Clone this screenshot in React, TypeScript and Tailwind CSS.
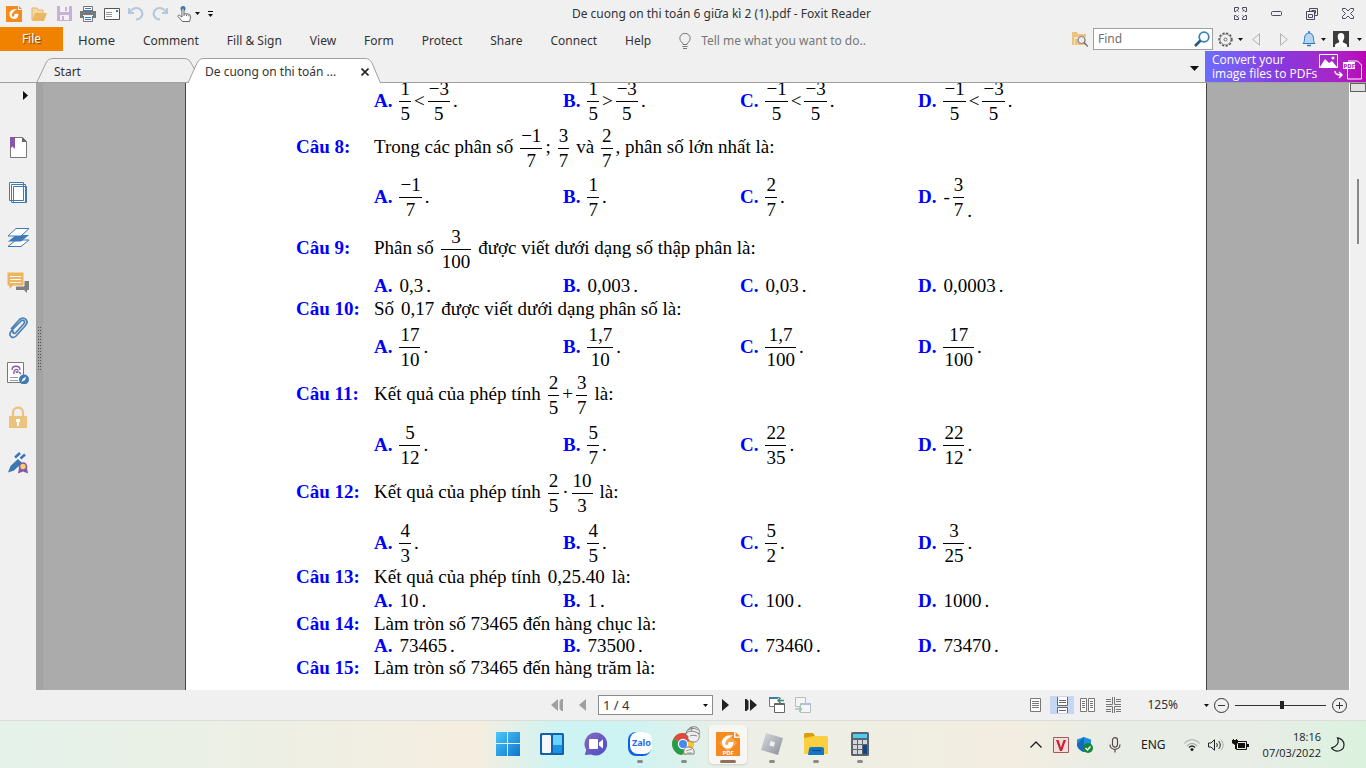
import type { ReactNode } from "react";

const menuItems = ["Comment", "Fill & Sign", "View", "Form", "Protect", "Share", "Connect", "Help"];

function Caret({ className = "" }: { className?: string }) {
  return (
    <svg className={`w-[5px] h-[3px] shrink-0 ${className}`} viewBox="0 0 5 3">
      <path d="M0 0h5L2.5 3z" fill="#111" />
    </svg>
  );
}

/* ---------- Math ---------- */

function Frac({ n, d }: { n: string; d: string }) {
  return (
    <span className="inline-flex flex-col pt-0.5 text-center leading-6">
      <span className="px-px">{n}</span>
      <span className="px-px border-t border-black">{d}</span>
    </span>
  );
}

function Formula({ children }: { children: ReactNode }) {
  return <span className="inline-flex items-center gap-[3px]">{children}</span>;
}

/* ---------- Questions ---------- */

type Question = {
  id: number;
  text?: ReactNode;
  options?: ReactNode[];
  textHeight?: string;
  optionsHeight?: string;
};

const dot = <span>.</span>;

const questions: Question[] = [
  {
    id: 7,
    optionsHeight: "h-12",
    options: [
      <><Frac n="1" d="5" />&lt;<Frac n="−3" d="5" />{dot}</>,
      <><Frac n="1" d="5" />&gt;<Frac n="−3" d="5" />{dot}</>,
      <><Frac n="−1" d="5" />&lt;<Frac n="−3" d="5" />{dot}</>,
      <><Frac n="−1" d="5" />&lt;<Frac n="−3" d="5" />{dot}</>,
    ],
  },
  {
    id: 8,
    textHeight: "h-12",
    optionsHeight: "h-[50px]",
    text: (
      <>
        Trong các phân số
        <Formula><Frac n="−1" d="7" />;</Formula>
        <Frac n="3" d="7" />
        và
        <Formula><Frac n="2" d="7" />, phân số lớn nhất là:</Formula>
      </>
    ),
    options: [
      <><Frac n="−1" d="7" />{dot}</>,
      <><Frac n="1" d="7" />{dot}</>,
      <><Frac n="2" d="7" />{dot}</>,
      <>-<Frac n="3" d="7" /><span className="self-end">.</span></>,
    ],
  },
  {
    id: 9,
    textHeight: "h-[54px]",
    optionsHeight: "h-[22px]",
    text: <>Phân số <Frac n="3" d="100" /> được viết dưới dạng số thập phân là:</>,
    options: [<>0,3{dot}</>, <>0,003{dot}</>, <>0,03{dot}</>, <>0,0003{dot}</>],
  },
  {
    id: 10,
    textHeight: "h-6",
    optionsHeight: "h-12",
    text: <>Số <span>0,17</span> <span>được viết dưới dạng phân số là:</span></>,
    options: [
      <><Frac n="17" d="10" />{dot}</>,
      <><Frac n="1,7" d="10" />{dot}</>,
      <><Frac n="1,7" d="100" />{dot}</>,
      <><Frac n="17" d="100" />{dot}</>,
    ],
  },
  {
    id: 11,
    textHeight: "h-[50px]",
    optionsHeight: "h-12",
    text: <>Kết quả của phép tính <Formula><Frac n="2" d="5" />+<Frac n="3" d="7" /></Formula> là:</>,
    options: [
      <><Frac n="5" d="12" />{dot}</>,
      <><Frac n="5" d="7" />{dot}</>,
      <><Frac n="22" d="35" />{dot}</>,
      <><Frac n="22" d="12" />{dot}</>,
    ],
  },
  {
    id: 12,
    textHeight: "h-[50px]",
    optionsHeight: "h-12",
    text: <>Kết quả của phép tính <Formula><Frac n="2" d="5" />·<Frac n="10" d="3" /></Formula> là:</>,
    options: [
      <><Frac n="4" d="3" />{dot}</>,
      <><Frac n="4" d="5" />{dot}</>,
      <><Frac n="5" d="2" />{dot}</>,
      <><Frac n="3" d="25" />{dot}</>,
    ],
  },
  {
    id: 13,
    textHeight: "h-6",
    optionsHeight: "h-6",
    text: <>Kết quả của phép tính <span>0,25.40</span> <span>là:</span></>,
    options: [<>10{dot}</>, <>1{dot}</>, <>100{dot}</>, <>1000{dot}</>],
  },
  {
    id: 14,
    textHeight: "h-[22px]",
    optionsHeight: "h-[22px]",
    text: "Làm tròn số 73465 đến hàng chục là:",
    options: [<>73465{dot}</>, <>73500{dot}</>, <>73460{dot}</>, <>73470{dot}</>],
  },
  { id: 15, textHeight: "h-[22px]", text: "Làm tròn số 73465 đến hàng trăm là:" },
];

function QuestionBlock({ q }: { q: Question }) {
  return (
    <li>
      {q.text && (
        <div className={`flex items-center ${q.textHeight}`}>
          <b className="w-[78px] shrink-0 text-[#0000ff]">Câu {q.id}:</b>
          <p className="flex items-center gap-[7px]">{q.text}</p>
        </div>
      )}
      {q.options && (
        <div className={`grid grid-cols-[189px_177px_178px_auto] items-center pl-[78px] ${q.optionsHeight}`}>
          {q.options.map((opt, i) => (
            <div key={i} className="flex items-center gap-[7px]">
              <b className="text-[#0000ff]">{"ABCD"[i]}.</b>
              <Formula>{opt}</Formula>
            </div>
          ))}
        </div>
      )}
    </li>
  );
}

/* ---------- Title bar ---------- */

function FoxitLogo({ className }: { className: string }) {
  return (
    <svg className={className} viewBox="0 0 24 24">
      <path d="M0 0h18v6h6v18H0z" fill="#f58a1f" />
      <path d="M19.500 0L24 4.500h-4.500z" fill="#f58a1f" />
      <path d="M17 4.500c-7-1-12 3-12 8 0 4 3 7 7 7 4.500 0 7-3.500 6.500-8h-6c.3 3-.5 4.500-2 4.500-1.700 0-2-2-1.300-4 1-3 4-5.500 7.800-7.500z" fill="#fff" />
    </svg>
  );
}

function TitleBar() {
  return (
    <div className="flex items-center h-[27px]">
      <div className="flex items-center gap-2 pl-1.5">
        <FoxitLogo className="w-4 h-4" />
        <button aria-label="Open" className="pl-px">
          <svg className="w-[17px] h-4" viewBox="0 0 17 16">
            <path d="M1 14V2h5l1.500 2H12v3" fill="#f3d9a8" stroke="#e6b566" />
            <path d="M1 15L4 7h12l-3 8z" fill="#ecb762" />
          </svg>
        </button>
        <button aria-label="Save" className="pl-px">
          <svg className="w-[15px] h-[15px]" viewBox="0 0 15 15">
            <path d="M0 0h15v15H0z" fill="#c7b1d4" />
            <path d="M3 0h9v6H3zM3 9h9v5H3z" fill="#f4f0f6" />
            <path d="M8 1h2v4H8zM5 10h2v4H5z" fill="#c7b1d4" />
          </svg>
        </button>
        <button aria-label="Print">
          <svg className="w-4 h-4" viewBox="0 0 16 16">
            <path d="M3.500 5V.5h9V5M3.500 10v5.500h9V10" fill="#fff" stroke="#777" />
            <path d="M0 5h16v7h-3V9H3v3H0z" fill="#777" />
            <path d="M3 4.500h10" stroke="#3b76b5" />
            <path d="M5 2.500h6M5 11.500h6M5 13.500h6" stroke="#3b76b5" />
          </svg>
        </button>
        <button aria-label="Email">
          <svg className="w-4 h-3" viewBox="0 0 16 12">
            <path d="M.5.5h15v11H.5z" fill="#fff" stroke="#555" />
            <path d="M2 4.500h6M2 6.500h6M2 8.500h6" stroke="#999" />
            <path d="M12 2h2v2h-2z" fill="#3b76b5" />
          </svg>
        </button>
        <button aria-label="Undo">
          <svg className="w-4 h-4" viewBox="0 0 16 16" fill="none" stroke="#b4c8dc" strokeWidth="2">
            <path d="M1 2v5h5M1.500 6.500C4 2 9 0.500 12.500 3.500c4 4 1 10-4.500 10" />
          </svg>
        </button>
        <button aria-label="Redo">
          <svg className="w-4 h-4" viewBox="0 0 16 16" fill="none" stroke="#b4c8dc" strokeWidth="2">
            <path d="M15 2v5h-5M14.500 6.500C12 2 7 0.500 3.500 3.500c-4 4-1 10 4.500 10" />
          </svg>
        </button>
        <button aria-label="Hand tool" className="flex items-center gap-[3px] pl-px">
          <svg className="w-[15px] h-4" viewBox="0 0 15 16">
            <circle cx="6" cy="2.500" r="2.500" fill="#3b76b5" />
            <path d="M5 11V3.500c0-1.300 2-1.300 2 0V8c2-.5 6 0 6.500 1.500.3 1.500-.3 3.500-1 6H5.500L1 10.500c-.5-1.200 1-1.800 2-.8z" fill="#fff" stroke="#666" />
            <path d="M7 8v2M9.500 8.500V10M12 9v1.500" stroke="#666" />
          </svg>
          <Caret />
        </button>
        <button aria-label="Customize" className="flex flex-col gap-0.5">
          <span className="h-px w-[5px] bg-black" />
          <Caret />
        </button>
      </div>

      <h1 className="flex-1 pr-1 text-center text-[12px]">De cuong on thi toán 6 giữa kì 2 (1).pdf - Foxit Reader</h1>

      <div className="flex items-center gap-6 pr-3 text-[#4a4a60]">
        <button aria-label="Full screen">
          <svg className="w-[13px] h-[13px]" viewBox="0 0 13 13" fill="none" stroke="currentColor">
            <path d="M.5.5h4v1.500L2 4.500H.5zM8.500.5h4v4H11L8.500 2zM.5 8.500H2L4.500 11v1.500h-4zM11 8.500h1.500v4h-4V11z" />
            <path d="M3 3l1.500 1.500M10 3L8.500 4.500M3 10l1.500-1.500M10 10L8.500 8.500" />
          </svg>
        </button>
        <button aria-label="Minimize">
          <svg className="w-[11px] h-[11px]" viewBox="0 0 11 11" fill="none" stroke="currentColor">
            <rect x=".5" y="3.500" width="10" height="4" rx="1" />
          </svg>
        </button>
        <button aria-label="Restore">
          <svg className="w-3 h-3" viewBox="0 0 12 12" fill="none" stroke="currentColor">
            <path d="M3.500 3.500v-3h8v7h-3M5.500 2.500h4v3M.5 3.500h8v8h-8zM2.500 6.500h4v3h-4z" />
          </svg>
        </button>
        <button aria-label="Close">
          <svg className="w-3 h-[11px]" viewBox="0 0 12 11" fill="none" stroke="currentColor">
            <path d="M.5.5h3L6 3 8.500.5h3v2L8.500 5.500l3 3v2h-3L6 8l-2.500 2.500h-3v-2l3-3-3-3z" />
          </svg>
        </button>
      </div>
    </div>
  );
}

/* ---------- Menu bar ---------- */

function MenuBar() {
  return (
    <div className="flex items-center h-6 text-[12px]">
      <button className="w-[63px] h-6 bg-[#f08200] text-white [text-shadow:1px_1px_1px_#7a4300]">File</button>
      <nav className="flex items-center gap-7 ml-[15px] pt-1">
        <button className="text-[13px]">Home</button>
        {menuItems.map((item) => (
          <button key={item}>{item}</button>
        ))}
      </nav>
      <label className="flex items-center gap-2.5 ml-7 pt-1">
        <svg className="w-3 h-4" viewBox="0 0 12 16" fill="none" stroke="#777">
          <path d="M4 11.500C4 9.500.8 8.500.8 5.500a5.200 5.200 0 0 1 10.400 0c0 3-3.200 4-3.200 6zM3.500 13.500h5M4 15.500h4" />
        </svg>
        <input className="w-[190px] outline-none placeholder:text-[#777]" placeholder="Tell me what you want to do.." />
      </label>

      <div className="flex items-center ml-auto pr-1">
        <svg className="w-4 h-4 mr-[5px]" viewBox="0 0 16 16">
          <path d="M0 1h5l1 2h8v11H0z" fill="#ecc37c" />
          <path d="M2 6h12v2H3v6H2z" fill="#f6e2bd" />
          <circle cx="9.500" cy="9" r="3.500" fill="#eee" stroke="#777" />
          <path d="M12 11.500l4 4" stroke="#777" strokeWidth="1.500" />
        </svg>
        <label className="flex items-center w-[120px] h-[22px] border border-[#a0a0a0] bg-white pl-1 pr-0.5">
          <input className="w-full outline-none placeholder:text-[#707070]" placeholder="Find" />
          <svg className="w-4 h-4 shrink-0" viewBox="0 0 16 16">
            <circle cx="10" cy="6" r="4.800" fill="#fff" stroke="#3b86b8" strokeWidth="1.800" />
            <path d="M6.500 9.500L1 15" stroke="#205a90" strokeWidth="2.600" />
          </svg>
        </label>
        <button aria-label="Settings" className="flex items-center gap-[5px] ml-[5px]">
          <svg className="w-[15px] h-[15px]" viewBox="0 0 15 15" fill="none" stroke="#555">
            <circle cx="7.500" cy="7.500" r="6.400" strokeWidth="1.500" strokeDasharray="2.200 1.550" />
            <circle cx="7.500" cy="7.500" r="5.400" strokeWidth=".6" />
            <circle cx="7.500" cy="7.500" r="1.500" strokeWidth=".8" />
          </svg>
          <Caret />
        </button>
        <button aria-label="Previous" className="ml-[9px]">
          <svg className="w-2 h-[13px]" viewBox="0 0 8 13" fill="none" stroke="#b0b0b0"><path d="M7.500.8v11.400L.7 6.500z" /></svg>
        </button>
        <button aria-label="Next" className="ml-5">
          <svg className="w-2 h-[13px]" viewBox="0 0 8 13" fill="none" stroke="#b0b0b0"><path d="M.5.8v11.400L7.300 6.500z" /></svg>
        </button>
        <button aria-label="Notifications" className="flex items-center gap-[5px] ml-3.5">
          <svg className="w-[14px] h-4" viewBox="0 0 14 16">
            <path d="M1 12.500c1-1 1.500-2 1.500-5C2.500 4 4.500 2 7 2s4.500 2 4.500 5.500c0 3 .5 4 1.500 5z" fill="#b5d5f5" stroke="#2f78b8" />
            <path d="M7 0v2M5 14.500h4" stroke="#2f78b8" strokeWidth="1.500" />
          </svg>
          <Caret />
        </button>
        <button aria-label="Account" className="flex items-center gap-2 ml-[7px]">
          <svg className="w-4 h-4" viewBox="0 0 16 16">
            <path d="M0 0h16v16H0z" fill="#3c3c3c" />
            <path d="M8 2c2.200 0 3.300 1.500 3.300 3.800S10 10 9.700 10.500c0 1.500 3.300 1.500 4.300 3.500v2H2v-2c1-2 4.300-2 4.300-3.500C6 10 4.700 8 4.700 5.800S5.800 2 8 2z" fill="#fff" />
          </svg>
          <Caret />
        </button>
      </div>
    </div>
  );
}

/* ---------- Document tabs ---------- */

function TabBar() {
  return (
    <div className="flex h-8 border-b border-[#a0a0a0] text-[12px]">
      <button className="relative flex items-center mt-[7px] ml-9 w-40 h-6 pt-1 pl-[18px]">
        <svg className="absolute inset-0 w-full h-full" viewBox="0 0 160 24" fill="none" stroke="#a0a0a0">
          <path d="M1 24L10 5Q12 .5 17 .5H148Q153 .5 155 5L160 14" />
        </svg>
        <span className="relative">Start</span>
      </button>
      <div className="relative flex items-center mt-[7px] -ml-2 w-[193px] h-6 pt-1 pl-[17px]">
        <svg className="absolute inset-0 w-full h-[25px]" viewBox="0 0 193 25" fill="#fff" stroke="#a0a0a0">
          <path d="M0 25L9 5Q11 .5 16 .5H177Q182 .5 184 5L192.500 25" />
        </svg>
        <span className="relative">De cuong on thi toán ...</span>
        <button aria-label="Close tab" className="relative ml-auto mr-3">
          <svg className="w-2 h-2" viewBox="0 0 8 8" stroke="#222" strokeWidth="1.600"><path d="M.5.5l7 7M7.500.5l-7 7" /></svg>
        </button>
      </div>
      <button aria-label="Tab list" className="ml-auto mr-[6px] pt-1">
        <svg className="w-[9px] h-[5px]" viewBox="0 0 9 5"><path d="M0 0h9L4.500 5z" fill="#111" /></svg>
      </button>
      <a
        href="#convert"
        className="flex items-center justify-between w-[161px] pl-[7px] pr-1 bg-linear-to-r from-[#6b6cff] via-[#8a35dc] to-[#bb00b8] text-white leading-[14px] font-['Open_Sans',sans-serif]"
      >
        <span className="whitespace-nowrap">Convert your<br />image files to PDFs</span>
        <svg className="w-[43px] h-[27px] -ml-2 shrink-0" viewBox="0 0 43 27" fill="none" stroke="#fff">
          <path d="M.5 1.500h18v13H.5z" />
          <path d="M1 14l5-8 4 4 3-2 5 6z" fill="#fff" stroke="none" />
          <circle cx="14" cy="5" r="1.500" fill="#fff" stroke="none" />
          <path d="M16 18c0 3 2 4 6 4M20 19l3 3-3 3" strokeWidth="1.500" />
          <path d="M28.500 16v10h14V12l-4-4H29" />
          <path d="M24 9h12v7H24z" fill="#fff" stroke="none" />
          <text x="24.500" y="15" fontSize="6" fontWeight="700" fill="#a010c0" stroke="none">PDF</text>
        </svg>
      </a>
    </div>
  );
}

/* ---------- Left panel ---------- */

const panelIcons: { label: string; icon: ReactNode }[] = [
  {
    label: "Bookmarks",
    icon: (
      <>
        <path d="M3.500 1.500h12l4 4v16h-16z" fill="#fff" stroke="#777" />
        <path d="M15 1l5 5h-5z" fill="#666" />
        <path d="M3 1h5v12l-2.500-2.500L3 13z" fill="#8658a6" />
      </>
    ),
  },
  {
    label: "Pages",
    icon: (
      <g fill="#fff" stroke="#3f7ab5">
        <path d="M2.500 1.500h14v18h-14zM4.500 3.500h14v18h-14zM6.500 5.500h13v16h-13z" />
      </g>
    ),
  },
  {
    label: "Layers",
    icon: (
      <>
        <path d="M1 20.500L9 14h13l-8 6.500z" fill="#fff" stroke="#3f7ab5" />
        <path d="M1 15.500L9 9h13l-8 6.500z" fill="#3f7ab5" />
        <path d="M1 10L9 2.500h13L14 10z" fill="#fff" stroke="#3f7ab5" />
      </>
    ),
  },
  {
    label: "Comments",
    icon: (
      <>
        <path d="M11 10h11v9h-2v3l-3-3h-8v-3z" fill="#808080" />
        <path d="M0 1h17v14H6l-4 4v-4H0z" fill="#f0b45c" stroke="#f0f0f0" />
        <path d="M3 5.500h11M3 8.500h11M3 11.500h11" stroke="#fff" />
      </>
    ),
  },
  {
    label: "Attachments",
    icon: (
      <path d="M6 13l8-8c2-2 4.500 0 3 2.500l-8 9c-2 2-4 0-2.500-2M6 13l-2 2.500c-3 4 1.500 8 5 4.500l9-10c5-5-1-10.500-5.500-6.500L4 13" fill="none" stroke="#4a80b5" strokeWidth="1.700" />
    ),
  },
  {
    label: "Signatures",
    icon: (
      <>
        <path d="M.5 1.500h16v20H.5z" fill="#fff" stroke="#777" />
        <path d="M5 9c0-5 8-5 8 0M7 13c-1-5 4-6 4-3 0 2-2 2-2 0M12 11l2 2" fill="none" stroke="#8658a6" strokeWidth="1.300" />
        <path d="M3 16.500h8M3 19.500h8" stroke="#999" />
        <circle cx="17" cy="18.500" r="5" fill="#3f7ab5" />
        <path d="M14.500 21l1-3 3.500-2.500-1 3.500z" fill="#fff" />
      </>
    ),
  },
  {
    label: "Security",
    icon: (
      <>
        <path d="M6 11V6.500c0-6.500 10-6.500 10 0V11" fill="none" stroke="#ecc37c" strokeWidth="2.200" />
        <path d="M2 10h18v12H2z" fill="#ecc37c" />
        <path d="M9 13h4v3h-1v4h-2v-4H9z" fill="#fff" />
      </>
    ),
  },
  {
    label: "Digital signing",
    icon: (
      <>
        <path d="M1 21.500L3.500 15l7.500-7 4 4-8 7.500z" fill="#3b76b5" />
        <path d="M13.500 7.500L18 3.500M8 6.500l5-4.500" stroke="#3b76b5" strokeWidth="2.500" />
        <path d="M12 17l-1 5.500 5-2 5 2-1-5.500z" fill="#8658a6" />
        <circle cx="16" cy="15.500" r="3.500" fill="#f3d36a" stroke="#8658a6" strokeWidth="1.600" />
      </>
    ),
  },
];

function LeftPanel() {
  return (
    <aside className="flex flex-col w-9 shrink-0 bg-[#f0f0f0] pt-2 pl-[7px]">
      <button aria-label="Expand panel" className="ml-4 mb-9">
        <svg className="w-[5px] h-[9px]" viewBox="0 0 5 9"><path d="M0 0l5 4.500L0 9z" fill="#111" /></svg>
      </button>
      <div className="flex flex-col gap-[22px]">
        {panelIcons.map(({ label, icon }) => (
          <button key={label} aria-label={label}>
            <svg className="w-[23px] h-[23px]" viewBox="0 0 23 23">{icon}</svg>
          </button>
        ))}
      </div>
    </aside>
  );
}

/* ---------- Status bar ---------- */

function StatusBar() {
  return (
    <div className="grid grid-cols-[1fr_auto_1fr] items-center h-[30px] bg-[#f0f0f0] text-[12px]">
      <span />
      <div className="flex items-center">
        <button aria-label="First page">
          <svg className="w-3 h-3" viewBox="0 0 12 12" fill="#a0a0a0"><path d="M7 0v12L0 6zM12 0h-1.500l-2 2v8l2 2H12z" /></svg>
        </button>
        <button aria-label="Previous page" className="ml-4 mr-3">
          <svg className="w-[7px] h-3" viewBox="0 0 7 12" fill="#a0a0a0"><path d="M7 0v12L0 6z" /></svg>
        </button>
        <div className="relative flex items-center">
          <select aria-label="Page" className="appearance-none w-[115px] h-5 pl-1 bg-white border border-[#8c8c8c] text-[13px] leading-4">
            <option>1 / 4</option>
          </select>
          <Caret className="absolute right-[5px]" />
        </div>
        <button aria-label="Next page" className="ml-[9px] mr-4">
          <svg className="w-[7px] h-3" viewBox="0 0 7 12" fill="#222"><path d="M0 0v12l7-6z" /></svg>
        </button>
        <button aria-label="Last page">
          <svg className="w-3 h-3" viewBox="0 0 12 12" fill="#222"><path d="M5 0v12l7-6zM0 0h1.500l2 2v8l-2 2H0z" /></svg>
        </button>
        <button aria-label="Previous view" className="ml-3">
          <svg className="w-4 h-4" viewBox="0 0 16 16">
            <path d="M.5.5h10v9H.5z" fill="#fff" stroke="#777" />
            <path d="M0 0h9v2H0z" fill="#3f7ab5" />
            <path d="M5.500 6.500h10v9h-10z" fill="#fff" stroke="#666" />
            <path d="M5 7.500h11" stroke="#666" />
            <path d="M15 3.500H9M11.500 1L9 3.500 11.500 6" fill="none" stroke="#3d9070" strokeWidth="1.500" />
          </svg>
        </button>
        <button aria-label="Next view" className="ml-2.5 mr-1">
          <svg className="w-4 h-4" viewBox="0 0 16 16">
            <path d="M.5.5h10v9H.5z" fill="#f5f5f5" stroke="#bbb" />
            <path d="M5.500 6.500h10v9h-10z" fill="#f5f5f5" stroke="#bbb" />
            <path d="M6 7h10" stroke="#a9c3dd" strokeWidth="2" />
            <path d="M0 12h6M4 9.500L6.500 12 4 14.500" fill="none" stroke="#9cc8b4" strokeWidth="1.500" />
          </svg>
        </button>
      </div>

      <div className="flex items-center justify-end pr-[19px]">
        <button aria-label="Single page" className="mr-[9px]">
          <svg className="w-[11px] h-[14px]" viewBox="0 0 11 14" fill="#fff" stroke="#777">
            <path d="M.5.5h10v13H.5zM2 3.500h7M2 5.500h7M2 7.500h7M2 9.500h7" />
          </svg>
        </button>
        <button aria-label="Continuous" className="flex justify-center items-center w-6 h-[18px] bg-[#c4d6f2]">
          <svg className="w-[11px] h-4" viewBox="0 0 11 16" fill="#fff" stroke="#666">
            <path d="M.5-.5h10v9H.5zM.5 16.500v-6h10v6M2 3.500h7M2 5.500h7M2 13.500h7" />
          </svg>
        </button>
        <button aria-label="Facing" className="ml-1.5">
          <svg className="w-[15px] h-[14px]" viewBox="0 0 15 14" fill="#fff" stroke="#777">
            <path d="M.5.5h6v13h-6zM8.500.5h6v13h-6zM2 3.500h3M2 5.500h3M2 7.500h3M2 9.500h3M10 3.500h3M10 5.500h3M10 7.500h3M10 9.500h3" />
          </svg>
        </button>
        <button aria-label="Continuous facing" className="ml-[11px]">
          <svg className="w-[15px] h-4" viewBox="0 0 15 16" fill="none" stroke="#777">
            <path d="M6.500 0v7.500H0M8.500 0v7.500H15M0 9.500h6.500V16M15 9.500H8.500V16M0 2.500h5M0 4.500h5M10 2.500h5M10 4.500h5M0 12.500h5M0 14.500h5M10 12.500h5M10 14.500h5" />
          </svg>
        </button>
        <button className="flex items-center gap-[26px] ml-[26px] mr-[5px]">125% <Caret /></button>
        <button aria-label="Zoom out">
          <svg className="w-[15px] h-[15px]" viewBox="0 0 15 15" fill="none" stroke="#333"><circle cx="7.500" cy="7.500" r="7" /><path d="M4 7.500h7" /></svg>
        </button>
        <input
          type="range"
          aria-label="Zoom"
          defaultValue={52}
          className="appearance-none w-[91px] h-px mx-1.5 bg-[#333] [&::-webkit-slider-thumb]:appearance-none [&::-webkit-slider-thumb]:w-1 [&::-webkit-slider-thumb]:h-2 [&::-webkit-slider-thumb]:bg-[#222]"
        />
        <button aria-label="Zoom in">
          <svg className="w-[15px] h-[15px]" viewBox="0 0 15 15" fill="none" stroke="#333"><circle cx="7.500" cy="7.500" r="7" /><path d="M4 7.500h7M7.500 4v7" /></svg>
        </button>
      </div>
    </div>
  );
}

/* ---------- Taskbar ---------- */

const apps: { name: string; running?: boolean; active?: boolean; icon: ReactNode }[] = [
  {
    name: "Start",
    icon: (
      <>
        <defs>
          <linearGradient id="win" x1="0" y1="0" x2="1" y2="1">
            <stop offset="0" stopColor="#4cc8f8" />
            <stop offset="1" stopColor="#0f74d0" />
          </linearGradient>
        </defs>
        <path d="M0 0h11v11H0zM12 0h12v11H12zM0 12h11v12H0zM12 12h12v12H12z" fill="url(#win)" />
      </>
    ),
  },
  {
    name: "Widgets",
    icon: (
      <>
        <rect y="1" width="24" height="22" rx="1.500" fill="#1560ac" />
        <rect x="2" y="3" width="9" height="18" rx="1" fill="#f4f6f8" />
        <path d="M13 3h9v10h-9z" fill="#68d4fb" />
        <path d="M13 13h9v8h-9z" fill="#1793e8" />
      </>
    ),
  },
  {
    name: "Chat",
    icon: (
      <>
        <defs>
          <linearGradient id="chat" x1="0" y1="0" x2="1" y2="1">
            <stop offset="0" stopColor="#8a68c0" />
            <stop offset="1" stopColor="#4a4cc8" />
          </linearGradient>
        </defs>
        <path d="M12 .5A11.500 11.500 0 1 1 7 22.500L.8 23l1.400-5A11.500 11.500 0 0 1 12 .5z" fill="url(#chat)" />
        <rect x="5" y="7" width="9" height="10" rx="1" fill="#fff" />
        <path d="M15 10.500L19 7.500v9L15 13.500z" fill="#fff" />
      </>
    ),
  },
  {
    name: "Zalo",
    running: true,
    icon: (
      <>
        <rect width="23" height="24" rx="8" fill="#0b62ea" />
        <rect x="2" y="0" width="22" height="22" rx="8" fill="#fff" />
        <text x="4" y="14" fontSize="9" fontWeight="700" fill="#1b6cf0">Zalo</text>
      </>
    ),
  },
  {
    name: "Chrome",
    running: true,
    icon: (
      <>
        <circle cx="11" cy="12" r="11" fill="#f8c630" />
        <path d="M11 12L1.500 6.500A11 11 0 0 1 21 7.500z" fill="#dd4b3e" />
        <path d="M11 12L1.500 6.500A11 11 0 0 0 10 23l5-8z" fill="#259b4d" />
        <circle cx="11" cy="12" r="5.200" fill="#fff" />
        <circle cx="11" cy="12" r="4" fill="#4687f2" />
        <path d="M14 2c1-6 6-8 10-7 3 1 4 4 3 7 1 4-1 8-5 8-5 0-7-3-6-6-2 0-2-1-2-2z" fill="#eee" stroke="#666" strokeWidth=".8" />
        <path d="M14 1c4-3 9-2 13 1M16-2c3-2 7-2 10 0M18 4c2-1 4-1 7 0M20-5c-1 2-1 3 0 4" fill="none" stroke="#555" strokeWidth=".7" />
        <path d="M12 22c-1-5 1-7 4-7 4 0 7 2 6 7z" fill="#eee" stroke="#666" strokeWidth=".8" />
        <path d="M14 19l6-2M15 21h5" stroke="#777" strokeWidth=".7" />
      </>
    ),
  },
  {
    name: "Foxit Reader",
    running: true,
    active: true,
    icon: (
      <>
        <path d="M0 0h18v6h6v18H0z" fill="#f58a1f" />
        <path d="M19.500 0L24 4.500h-4.500z" fill="#f58a1f" />
        <path d="M12 2l9 9-9 9-9-9z" fill="#f9a64f" />
        <path d="M17 3.500c-6-1-11 2-11 7 0 4 3 6 6 6 4 0 5.500-3 5.500-6.500h-5c0 2-.5 3-1.800 3-1.500 0-1.800-1.500-1.200-3 1-3 4-4.500 7.500-6.500z" fill="#fff" />
        <text x="6.500" y="23" fontSize="6" fontWeight="700" fill="#fff">PDF</text>
      </>
    ),
  },
  {
    name: "Roblox",
    running: true,
    icon: (
      <>
        <defs>
          <linearGradient id="rbx" x1="0" y1="0" x2="1" y2="1">
            <stop offset="0" stopColor="#d9dce0" />
            <stop offset="1" stopColor="#8b9099" />
          </linearGradient>
        </defs>
        <path d="M6 1l17 5-5 17L1 18z" fill="url(#rbx)" />
        <path d="M10.500 9l4.500 1.200-1.200 4.500-4.500-1.200z" fill="#f0f0f0" />
      </>
    ),
  },
  {
    name: "File Explorer",
    running: true,
    icon: (
      <>
        <path d="M0 2.500Q0 1 1.500 1H9l2 3-2 3H0z" fill="#dc9e08" />
        <path d="M0 6l10-2h12.500Q24 4 24 5.500V22H0z" fill="#fbcf40" />
        <path d="M5 17q0-2 2-2h11q2 0 2 2v6H4z" fill="#1476c8" />
        <path d="M8 18.500h9" stroke="#0d5496" strokeWidth="1.500" />
      </>
    ),
  },
  {
    name: "Calculator",
    running: true,
    icon: (
      <>
        <rect x="3" width="18" height="24" rx="1.500" fill="#5b646e" />
        <path d="M5 2h14v4H5z" fill="#4bcdf0" />
        <path d="M5 8h4v4H5zM10 8h4v4h-4zM15 8h4v4h-4zM5 13h4v4H5zM10 13h4v4h-4zM5 18h4v4H5zM10 18h4v4h-4z" fill="#d3d7db" />
        <path d="M15 13h4v9h-4z" fill="#0f4780" />
      </>
    ),
  },
];

function Taskbar() {
  return (
    <footer className="grid grid-cols-[1fr_auto_1fr] items-center h-12 border-t border-[#dcdcd8] bg-[linear-gradient(to_right,#e4f2ea,#f5ede0_35%,#cdf4f3_41%,#cdf4f3_46%,#ecefe6_54%,#f3ede0_74%,#e8ede6_82%,#e8ede6_92%,#dbf2de)] text-[12px] font-['Noto_Sans',sans-serif]">
      <span />
      <div className="flex gap-1.5 pl-0.5">
        {apps.map((app) => (
          <button
            key={app.name}
            aria-label={app.name}
            className={`flex flex-col items-center w-[38px] h-[39px] pt-[7px] rounded ${app.active ? "bg-[#f8f6f2] shadow-sm" : ""}`}
          >
            <svg className="w-6 h-6 shrink-0 overflow-visible" viewBox="0 0 24 24">{app.icon}</svg>
            {app.running && (
              <span className={`mt-1 h-[3px] rounded-full ${app.active ? "w-4 bg-[#94705c]" : "w-1.5 bg-[#8a8a88]"}`} />
            )}
          </button>
        ))}
      </div>

      <div className="flex items-center justify-end pr-[21px] text-[#1a1a1a]">
        <svg className="w-3 h-[7px] mr-[11px]" viewBox="0 0 12 7" fill="none" stroke="#222" strokeWidth="1.400"><path d="M.5 6.500L6 1l5.500 5.500" /></svg>
        <svg className="w-4 h-4 mr-2" viewBox="0 0 16 16">
          <path d="M.5.5h15v15H.5z" fill="#f3dede" stroke="#a05a5a" />
          <path d="M3 3h2.500L8 10.500 10.500 3H13L9 14H7z" fill="#cc2030" />
        </svg>
        <svg className="w-4 h-4 mr-4" viewBox="0 0 16 16">
          <path d="M7 0l7 2.500V7c0 4-3 6.500-7 8-4-1.500-7-4-7-8V2.500z" fill="#1e8fe0" />
          <path d="M7 0v15c-4-1.500-7-4-7-8z" fill="#1668b8" />
          <circle cx="11" cy="11" r="5" fill="#14863c" />
          <path d="M8.500 11l2 2 3-3.500" fill="none" stroke="#fff" strokeWidth="1.400" />
        </svg>
        <svg className="w-3 h-4 mr-5" viewBox="0 0 12 16" fill="none" stroke="#5a4848" strokeWidth="1.200">
          <rect x="3.500" y=".6" width="5" height="9.500" rx="2.500" />
          <path d="M1 7.500c0 6.500 10 6.500 10 0M6 12.500v3" />
        </svg>
        <span className="mr-[18px]">ENG</span>
        <svg className="w-4 h-3 mr-2" viewBox="0 0 16 12" fill="none">
          <path d="M.5 4.500c4-5 11-5 15 0M3 7c3-3.500 7-3.500 10 0" stroke="#aaa" strokeWidth="1.200" />
          <path d="M5 8.500c2-2 4-2 6 0" stroke="#222" strokeWidth="1.200" />
          <circle cx="8" cy="10.500" r="1.500" fill="#222" />
        </svg>
        <svg className="w-4 h-3 mr-2" viewBox="0 0 16 12" fill="none" stroke="#222">
          <path d="M.5 4h2.500L6.500.8v10.400L3 8H.5zM8.500 4c1 1 1 3 0 4M10.500 2c2.300 2 2.300 6 0 8" />
          <path d="M12.500.5c3.500 3 3.500 8 0 11" stroke="#aaa" />
        </svg>
        <svg className="w-[17px] h-3 mr-3.5" viewBox="0 0 17 12">
          <path d="M4.500 2.500h10v8h-10z" fill="none" stroke="#111" />
          <path d="M6 4h7v5H6zM15 5h2v3h-2zM0 1h1V0h1v1h2V0h1v1h1v3L4 6v4H3V6L0 4z" fill="#111" />
        </svg>
        <div className="mr-2.5 text-right leading-4 text-[11px] font-['Open_Sans',sans-serif]">
          <div>18:16</div>
          <div>07/03/2022</div>
        </div>
        <svg className="w-[14px] h-[15px]" viewBox="0 0 14 15" fill="none" stroke="#222" strokeWidth="1.200">
          <path d="M6.500.8c2 5-.5 9-6 10C5 16.500 13 14 13 7.500c0-3.500-3-6.300-6.500-6.700z" />
        </svg>
      </div>
    </footer>
  );
}

export default function App() {
  return (
    <div className="flex flex-col h-screen overflow-hidden bg-[#f0f0f0] text-[#333] font-['Noto_Sans',sans-serif]">
      <header>
        <TitleBar />
        <MenuBar />
        <TabBar />
      </header>

      <div className="flex flex-1 min-h-0">
        <LeftPanel />
        {/* Panel resize grip */}
        <div className="flex items-center w-[7px] pb-[76px] pl-[2px] shrink-0 bg-[#a3a3a3]">
          <svg className="w-[3px] h-11" viewBox="0 0 3 44" stroke="#505050" strokeDasharray="1 2">
            <path d="M.5 0v44M2.500 0v44" />
          </svg>
        </div>
        <main className="flex-1 overflow-hidden bg-[#ababab]">
          <article className="overflow-hidden h-full w-full max-w-[1022px] mx-auto border-x border-[#444] bg-white pl-[110px] text-[19px] leading-[22px] text-black font-['Liberation_Serif',serif] whitespace-nowrap">
            <ol className="-mt-2">
              {questions.map((q) => (
                <QuestionBlock key={q.id} q={q} />
              ))}
            </ol>
          </article>
        </main>
        <div className="flex flex-col items-center w-[17px] shrink-0 border-l border-white bg-[#f0f0f0]">
          <div className="w-full h-[9px] border border-[#606060] bg-[#e0e0e0]" />
          <div className="mt-[87px] w-0.5 h-[65px] bg-[#888]" />
        </div>
      </div>

      <StatusBar />
      <Taskbar />
    </div>
  );
}
